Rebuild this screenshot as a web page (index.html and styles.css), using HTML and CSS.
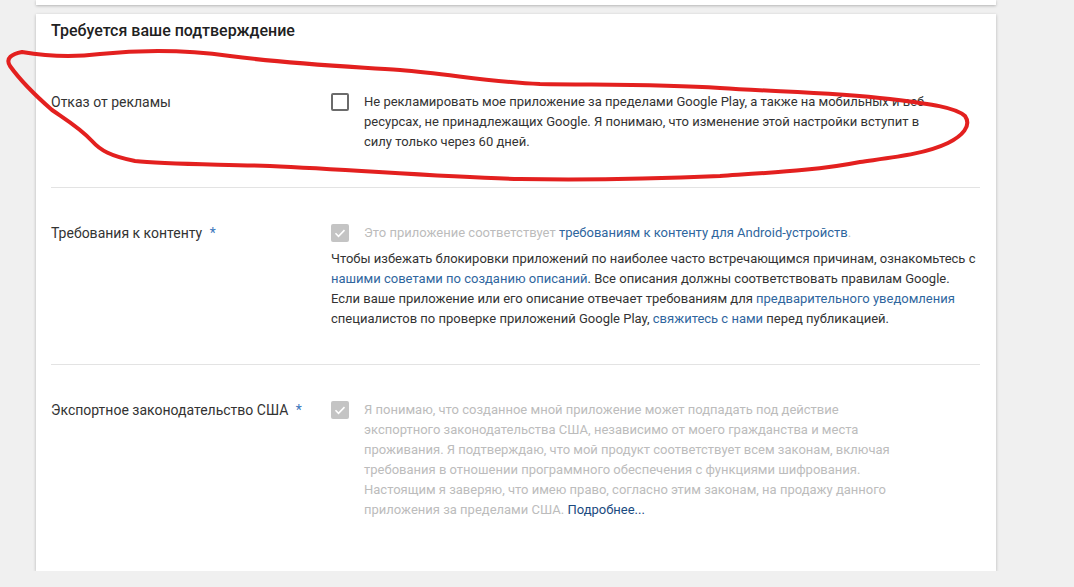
FILE: index.html
```html
<!DOCTYPE html>
<html lang="ru">
<head>
  <meta charset="UTF-8" />
  <title>Требуется ваше подтверждение</title>
  <link rel="stylesheet" href="styles.css">
</head>
<body>
  <div class="card card-prev"></div>

  <div class="card">
    <h3 class="card-title">Требуется ваше подтверждение</h3>

    <div class="row">
      <div class="label">Отказ от рекламы</div>
      <div class="field">
        <div class="check-line">
          <span class="checkbox"></span>
          <p class="text text-narrow">Не рекламировать мое приложение за пределами Google Play, а также на мобильных и веб-ресурсах, не принадлежащих Google. Я понимаю, что изменение этой настройки вступит в силу только через 60 дней.</p>
        </div>
      </div>
    </div>

    <div class="row">
      <div class="label">Требования к контенту <span class="req">*</span></div>
      <div class="field">
        <div class="check-line">
          <span class="checkbox checked">
            <svg viewBox="0 0 18 18" width="18" height="18"><path d="M4.5 9.3l3 3 6-6.2" fill="none" stroke="#fff" stroke-width="1.6"/></svg>
          </span>
          <p class="text muted">Это приложение соответствует <a href="#">требованиям к контенту для Android-устройств</a>.</p>
        </div>
        <p class="note">Чтобы избежать блокировки приложений по наиболее часто встречающимся причинам, ознакомьтесь с <a href="#">нашими советами по созданию описаний</a>. Все описания должны соответствовать правилам Google. Если ваше приложение или его описание отвечает требованиям для <a href="#">предварительного уведомления</a> специалистов по проверке приложений Google Play, <a href="#">свяжитесь с нами</a> перед публикацией.</p>
      </div>
    </div>

    <div class="row">
      <div class="label">Экспортное законодательство США <span class="req">*</span></div>
      <div class="field">
        <div class="check-line">
          <span class="checkbox checked">
            <svg viewBox="0 0 18 18" width="18" height="18"><path d="M4.5 9.3l3 3 6-6.2" fill="none" stroke="#fff" stroke-width="1.6"/></svg>
          </span>
          <p class="text muted text-export">Я понимаю, что созданное мной приложение может подпадать под действие экспортного законодательства США, независимо от моего гражданства и места проживания. Я подтверждаю, что мой продукт соответствует всем законам, включая требования в отношении программного обеспечения с функциями шифрования. Настоящим я заверяю, что имею право, согласно этим законам, на продажу данного приложения за пределами США. <a href="#" class="more">Подробнее...</a></p>
        </div>
      </div>
    </div>
  </div>

  <!-- пометка от руки поверх скриншота -->
  <svg class="scribble" width="1074" height="200" viewBox="0 0 1074 200">
    <path d="M22 52 C45 56 70 58 100 54 C140 50 180 49 230 56 C290 64 340 66 400 70 C450 74 490 82 540 84 C600 85 660 84 720 88 C780 92 830 92 890 99 C930 104 955 107 965 116 C972 126 962 136 948 143 C925 154 895 157 860 162 C820 170 780 172 720 176 C650 179 580 180 520 179 C440 177 360 170 270 166 C200 164 160 164 135 161 C110 156 100 150 92 141 C80 128 68 121 52 110 C36 96 20 80 10 66 C5 58 12 54 22 52" fill="none" stroke="#e3201f" stroke-width="4" stroke-linecap="round" stroke-linejoin="round"/>
  </svg>
</body>
</html>
```

FILE: styles.css
```css
body {
  margin: 0;
  padding: 0 78px 0 36px;
  background-color: #f0f0f0;
  font-family: Roboto, "Noto Sans", Arial, sans-serif;
  color: #333;
  position: relative;
}

.card {
  background-color: #fff;
  box-shadow: 0 1px 3px rgba(0, 0, 0, 0.25);
  padding: 7px 16px 15px 15px;
}

.card-prev {
  height: 5px;
  padding: 0;
  margin-bottom: 9px;
}

.card-title {
  margin: 0;
  font-size: 16px;
  font-weight: 500;
  line-height: 20px;
  color: #212121;
  height: 36px;
}

.row {
  display: flex;
  padding: 35px 0;
  border-bottom: 1px solid #e3e3e3;
}

.row:last-child {
  border-bottom: none;
  padding-bottom: 36px;
}

.label {
  width: 280px;
  flex-shrink: 0;
  font-size: 14px;
  line-height: 20px;
  color: #333;
}

.req {
  color: #3b78bd;
  margin-left: 4px;
}

.field {
  flex: 1;
}

.check-line {
  display: flex;
  align-items: flex-start;
}

.checkbox {
  width: 18px;
  height: 18px;
  box-sizing: border-box;
  border: 2px solid #6b6b6b;
  border-radius: 2px;
  margin: 1px 15px 0 0;
  flex-shrink: 0;
}

.checkbox.checked {
  border: none;
  background-color: #c4c4c4;
}

.checkbox svg {
  display: block;
}

.text {
  margin: 0;
  font-size: 13px;
  line-height: 20px;
  color: #333;
}

.text-narrow {
  max-width: 572px;
}

.text-export {
  max-width: 535px;
}

.muted {
  color: #bcbcbc;
}

.note {
  margin: 6px 0 0;
  font-size: 13px;
  line-height: 20px;
  color: #333;
}

a {
  color: #2f669e;
  text-decoration: none;
}

a.more {
  color: #1b4a7f;
}

.scribble {
  position: absolute;
  top: 0;
  left: 0;
  pointer-events: none;
}
```
